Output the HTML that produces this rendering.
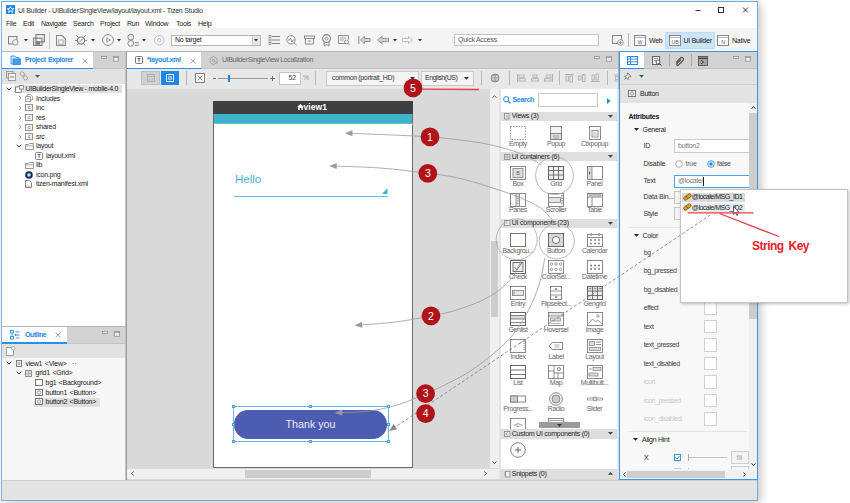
<!DOCTYPE html>
<html><head><meta charset="utf-8"><title>UI Builder</title>
<style>
*{box-sizing:border-box;margin:0;padding:0}
html,body{width:850px;height:503px;background:#fff;overflow:hidden}
body{position:relative;font-family:"Liberation Sans",sans-serif;font-size:7px;letter-spacing:-0.25px;color:#333;line-height:1}
.a{position:absolute}
.t{position:absolute;white-space:nowrap;line-height:10px;height:10px}
.b{font-weight:bold}
.blue{color:#1e88e5}
.gray{color:#999}
.lt{color:#c8c8c8}
svg{position:absolute;overflow:visible}
</style></head><body>
<div class="a" style="left:1px;top:1px;width:757.3px;height:500px;background:#f0f0f0;border:1px solid #74a9dc;border-left:1.300px solid #7fb0df;box-shadow:3px 2px 8px rgba(0,0,0,0.220)"></div>
<div class="a" style="left:2px;top:2px;width:755.3px;height:26px;background:#fff"></div>
<svg style="left:6px;top:5px" width="9" height="9" viewBox="0 0 9 9" ><rect width="9" height="9" fill="#1e88e5"/><path d="M4.5 1.5 L5.4 3.6 L7.6 3.8 L5.9 5.2 L6.5 7.4 L4.5 6.2 L2.5 7.4 L3.1 5.2 L1.4 3.8 L3.6 3.6Z" fill="none" stroke="#fff" stroke-width="0.9"/></svg>
<div class="t " style="left:18px;top:5.5px;color:#333;letter-spacing:-0.220px">UI Builder - UIBuilderSingleView/layout/layout.xml - Tizen Studio</div>
<svg style="left:690px;top:2px" width="66" height="15" viewBox="0 0 66 15" ><path d="M5.5 8.5h5" stroke="#333" stroke-width="1" fill="none"/><rect x="28.5" y="5.5" width="5" height="5" fill="none" stroke="#333" stroke-width="1"/><path d="M53 5.5l5 5M58 5.5l-5 5" stroke="#333" stroke-width="1" fill="none"/></svg>
<div class="t " style="left:6px;top:18.5px;color:#222">File</div>
<div class="t " style="left:23px;top:18.5px;color:#222">Edit</div>
<div class="t " style="left:41px;top:18.5px;color:#222">Navigate</div>
<div class="t " style="left:73px;top:18.5px;color:#222">Search</div>
<div class="t " style="left:100px;top:18.5px;color:#222">Project</div>
<div class="t " style="left:127px;top:18.5px;color:#222">Run</div>
<div class="t " style="left:145px;top:18.5px;color:#222">Window</div>
<div class="t " style="left:176px;top:18.5px;color:#222">Tools</div>
<div class="t " style="left:198px;top:18.5px;color:#222">Help</div>
<div class="a" style="left:2px;top:28px;width:755.3px;height:23px;background:#f4f4f4"></div>
<svg style="left:8px;top:34.75px" width="10.5" height="10.5" viewBox="0 0 10 10"><rect x="0.5" y="1.5" width="8" height="7" fill="none" stroke="#828282"/><circle cx="7" cy="7" r="2.6" fill="#f4f4f4" stroke="#828282" stroke-width="0.8"/></svg>
<svg style="left:24px;top:39px" width="4" height="3" viewBox="0 0 4 3" ><path d="M0 0h4l-2 2.5z" fill="#333"/></svg>
<svg style="left:33px;top:34.0px" width="12.0" height="12.0" viewBox="0 0 10 10"><rect x="0.5" y="3.5" width="7" height="6" fill="none" stroke="#828282"/><rect x="2.5" y="0.5" width="7" height="6" fill="none" stroke="#828282"/><rect x="2" y="6" width="4" height="3" fill="#828282"/></svg>
<div class="a" style="left:49px;top:32px;width:1px;height:17px;background:#c4c4c4"></div>
<svg style="left:56px;top:34.5px" width="9.9" height="11.0" viewBox="0 0 9 10"><path d="M0.5 0.5h5l3 3v6h-8z" fill="none" stroke="#888"/><rect x="2.5" y="4.5" width="4" height="4" fill="none" stroke="#aaa" stroke-width="0.8"/></svg>
<svg style="left:75px;top:34.0px" width="12.0" height="12.0" viewBox="0 0 10 10"><circle cx="5" cy="5.5" r="3" fill="none" stroke="#828282"/><path d="M1 1l2 2M9 1l-2 2M0 5.5h2M8 5.5h2M1.5 9.5l1.5-1.5M8.500 9.5l-1.5-1.500M3.500 7l3.500-3.500" stroke="#828282" stroke-width="0.8" fill="none"/></svg>
<svg style="left:91px;top:39px" width="4" height="3" viewBox="0 0 4 3" ><path d="M0 0h4l-2 2.5z" fill="#333"/></svg>
<svg style="left:101.5px;top:34.0px" width="12.0" height="12.0" viewBox="0 0 10 10"><circle cx="5" cy="5" r="4.5" fill="none" stroke="#888" stroke-width="0.8"/><path d="M4 3.200l3 1.800l-3 1.800z" fill="none" stroke="#888" stroke-width="0.7"/></svg>
<svg style="left:117px;top:39px" width="4" height="3" viewBox="0 0 4 3" ><path d="M0 0h4l-2 2.5z" fill="#333"/></svg>
<svg style="left:126.5px;top:33.75px" width="12.5" height="12.5" viewBox="0 0 10 10"><circle cx="3" cy="2.5" r="2.300" fill="none" stroke="#828282" stroke-width="0.8"/><circle cx="3" cy="7.500" r="2.300" fill="none" stroke="#828282" stroke-width="0.8"/><path d="M6.500 7h3M6.500 9h3" stroke="#828282" stroke-width="0.8"/></svg>
<svg style="left:142px;top:39px" width="4" height="3" viewBox="0 0 4 3" ><path d="M0 0h4l-2 2.5z" fill="#333"/></svg>
<svg style="left:154px;top:34.75px" width="10.5" height="10.5" viewBox="0 0 10 10"><circle cx="5" cy="5" r="4.500" fill="none" stroke="#bbb" stroke-width="0.8"/><circle cx="5" cy="5" r="1.700" fill="none" stroke="#bbb" stroke-width="0.8"/></svg>
<div class="a" style="left:171px;top:34.5px;width:90px;height:11.5px;background:#fff;border:1px solid #b5b5b5"></div>
<div class="t " style="left:175px;top:35.3px;color:#222">No target</div>
<div class="a" style="left:252px;top:35.5px;width:8px;height:9.5px;background:#e6e6e6;border-left:1px solid #c8c8c8"></div>
<svg style="left:254.2px;top:39px" width="4" height="3" viewBox="0 0 4 3" ><path d="M0 0h4l-2 2.5z" fill="#333"/></svg>
<svg style="left:269px;top:35.0px" width="11" height="10" viewBox="0 0 11 10"><path d="M3 1.500h8M3 5h8M3 8.500h8" stroke="#828282" stroke-width="1"/><rect x="0" y="0.500" width="2" height="2" fill="none" stroke="#828282" stroke-width="0.7"/><rect x="0" y="4" width="2" height="2" fill="none" stroke="#828282" stroke-width="0.7"/><rect x="0" y="7.500" width="2" height="2" fill="none" stroke="#828282" stroke-width="0.7"/></svg>
<svg style="left:286px;top:35.0px" width="11" height="10" viewBox="0 0 11 10"><circle cx="5" cy="4.800" r="4.200" fill="none" stroke="#828282" stroke-width="0.9"/><path d="M2 5h1.500l1-2l1.500 4l1-2h1.500M8 8l2.500 2" stroke="#828282" stroke-width="0.8" fill="none"/></svg>
<svg style="left:304px;top:35.0px" width="11" height="10" viewBox="0 0 11 10"><rect x="0.500" y="1" width="10" height="2.500" fill="none" stroke="#828282" stroke-width="0.9"/><path d="M1.500 3.500v5.500h8v-5.500M4 6h3" fill="none" stroke="#828282" stroke-width="0.9"/></svg>
<svg style="left:320px;top:34.0px" width="13.2" height="12.0" viewBox="0 0 11 10"><circle cx="5.500" cy="3.800" r="3.300" fill="none" stroke="#828282" stroke-width="0.9"/><circle cx="5.500" cy="3.800" r="1.200" fill="none" stroke="#828282" stroke-width="0.7"/><path d="M3.500 6.800v3.200l2-1l2 1v-3.200" fill="none" stroke="#828282" stroke-width="0.8"/></svg>
<svg style="left:338px;top:35.0px" width="12" height="10" viewBox="0 0 12 10"><path d="M8 8.500h-7.500v-8h10v4" fill="none" stroke="#828282" stroke-width="0.9"/><path d="M2 3h6M2 5h4" stroke="#828282" stroke-width="0.7"/><circle cx="8.500" cy="7" r="2" fill="none" stroke="#828282" stroke-width="0.8"/><path d="M10 8.500l1.700 1.500" stroke="#828282" stroke-width="0.8"/></svg>
<svg style="left:358px;top:35.0px" width="13" height="10" viewBox="0 0 13 10"><path d="M0.800 1v8" stroke="#828282" stroke-width="0.9"/><path d="M2.500 5l4-3.500v2h5.500v3h-5.500v2z" fill="#cfcfcf" stroke="#828282" stroke-width="0.8"/></svg>
<svg style="left:377px;top:35.0px" width="12" height="10" viewBox="0 0 12 10"><path d="M0.500 5l4.500-3.800v2.200h6.500v3.200h-6.500v2.200z" fill="#cfcfcf" stroke="#828282" stroke-width="0.8"/></svg>
<svg style="left:392.5px;top:39px" width="4" height="3" viewBox="0 0 4 3" ><path d="M0 0h4l-2 2.5z" fill="#333"/></svg>
<svg style="left:401.5px;top:35.0px" width="11" height="10" viewBox="0 0 11 10"><path d="M10.500 5l-4-3.500v2h-6v3h6v2z" fill="none" stroke="#aaa" stroke-width="0.8"/></svg>
<svg style="left:417.5px;top:39px" width="4" height="3" viewBox="0 0 4 3" ><path d="M0 0h4l-2 2.5z" fill="#333"/></svg>
<div class="a" style="left:454px;top:33.5px;width:145px;height:12px;background:#fff;border:1px solid #c6c6c6"></div>
<div class="t " style="left:458px;top:34.8px;color:#555">Quick Access</div>
<svg style="left:612px;top:35.0px" width="12" height="11" viewBox="0 0 12 11"><rect x="0.500" y="0.500" width="9" height="8" fill="none" stroke="#828282"/><circle cx="8.500" cy="7.500" r="2.800" fill="#f4f4f4" stroke="#828282" stroke-width="0.8"/><path d="M7 7.500h3M8.500 6v3" stroke="#828282" stroke-width="0.7"/></svg>
<div class="a" style="left:627.5px;top:33px;width:1px;height:14px;background:#b8b8b8"></div>
<svg style="left:634px;top:35px" width="12" height="11" viewBox="0 0 12 11" ><rect x="0.500" y="0.500" width="11" height="10" fill="#fff" stroke="#7a7a7a" stroke-width="0.9"/><path d="M0.500 2.500h11" stroke="#9a9a9a" stroke-width="0.700"/><text x="6" y="8.800" font-size="5.500" text-anchor="middle" fill="#666" font-family="Liberation Sans, sans-serif">W</text></svg>
<div class="t " style="left:649px;top:35.5px;color:#222">Web</div>
<div class="a" style="left:665px;top:32px;width:49.5px;height:16.5px;background:#cce4f7;border:1px solid #bcdcf4"></div>
<svg style="left:668.5px;top:35px" width="12" height="11" viewBox="0 0 12 11" ><rect x="0.500" y="0.500" width="11" height="10" fill="#fff" stroke="#7a7a7a" stroke-width="0.9"/><path d="M0.500 2.500h11" stroke="#9a9a9a" stroke-width="0.700"/><text x="6" y="8.800" font-size="5.500" text-anchor="middle" fill="#666" font-family="Liberation Sans, sans-serif">UB</text></svg>
<div class="t " style="left:683.5px;top:35.5px;color:#222">UI Builder</div>
<svg style="left:717px;top:35px" width="12" height="11" viewBox="0 0 12 11" ><rect x="0.500" y="0.500" width="11" height="10" fill="#fff" stroke="#7a7a7a" stroke-width="0.9"/><path d="M0.500 2.500h11" stroke="#9a9a9a" stroke-width="0.700"/><text x="6" y="8.800" font-size="5.500" text-anchor="middle" fill="#666" font-family="Liberation Sans, sans-serif">N</text></svg>
<div class="t " style="left:732px;top:35.5px;color:#222">Native</div>
<div class="a" style="left:2px;top:51px;width:123.5px;height:274.5px;background:#fff;border:1px solid #c4c4c4;border-top:1px solid #bdbdbd;border-bottom:none;border-left:none"></div>
<div class="a" style="left:2px;top:52px;width:123px;height:16px;background:#d2d2d2"></div>
<div class="a" style="left:2px;top:52px;width:91px;height:16px;background:#fff"></div>
<div class="a" style="left:2px;top:67.5px;width:91px;height:1.5px;background:#2b8fe6"></div>
<div class="a" style="left:93px;top:68px;width:32px;height:1px;background:#c2c2c2"></div>
<svg style="left:10px;top:55px" width="11" height="10" viewBox="0 0 11 10" ><path d="M1 1h4l1 1.500h3v6.500h-8z" fill="#cfe6fb" stroke="#3a94e6" stroke-width="0.9"/><path d="M3 4h7.500v5.500h-7.500z" fill="#4a9fea" stroke="#2b86dc" stroke-width="0.8"/></svg>
<div class="t b blue" style="left:25px;top:55.3px;letter-spacing:-0.450px;word-spacing:1px">Project Explorer</div>
<svg style="left:81.5px;top:57.5px" width="6" height="6" viewBox="0 0 6 6" ><path d="M0.500 0.500l5 5M5.500 0.500l-5 5" stroke="#999" stroke-width="0.8"/></svg>
<svg style="left:101px;top:56px" width="18" height="7" viewBox="0 0 18 7" ><rect x="0.500" y="0.500" width="5" height="2" fill="#e4e4e4" stroke="#949494" stroke-width="0.8"/><rect x="12.500" y="0.500" width="5" height="4.800" fill="#e8e8e8" stroke="#949494" stroke-width="0.8"/><path d="M12.500 1.500h5.500" stroke="#949494" stroke-width="0.8"/></svg>
<div class="a" style="left:2px;top:69px;width:123px;height:15px;background:#e2e2e2"></div>
<svg style="left:6px;top:71px" width="10" height="10" viewBox="0 0 10 10" ><rect x="0.500" y="0.500" width="6.500" height="6.500" fill="none" stroke="#8a8a8a" stroke-width="0.8"/><rect x="2.500" y="2.500" width="7" height="7" fill="#f2f2f2" stroke="#8a8a8a" stroke-width="0.8"/><path d="M4 6h4" stroke="#777" stroke-width="0.9"/></svg>
<svg style="left:19px;top:71px" width="10" height="10" viewBox="0 0 10 10" ><ellipse cx="3.300" cy="3" rx="2.400" ry="2" fill="none" stroke="#999" stroke-width="0.8" transform="rotate(40 3.300 3)"/><ellipse cx="6.300" cy="6.800" rx="2.400" ry="2" fill="none" stroke="#999" stroke-width="0.8" transform="rotate(40 6.300 6.800)"/></svg>
<svg style="left:35px;top:75px" width="5" height="3" viewBox="0 0 5 3" ><path d="M0 0h5l-2.500 2.800z" fill="#555"/></svg>
<div class="a" style="left:14px;top:84.5px;width:107.5px;height:8.5px;background:#e1e1e1"></div>
<svg style="left:6px;top:86.8px" width="6" height="4" viewBox="0 0 6 4" ><path d="M0.700 0.700l2.300 2.300l2.300-2.300" fill="none" stroke="#333" stroke-width="1"/></svg>
<svg style="left:14.5px;top:84.8px" width="9" height="8" viewBox="0 0 9 8" ><path d="M0.500 2h3l0.800-1h2v6.500h-5.800z" fill="#fafafa" stroke="#7a7a7a" stroke-width="0.9"/><rect x="4.500" y="0.500" width="4" height="3.500" fill="#fff" stroke="#7a7a7a" stroke-width="0.8"/></svg>
<div class="t " style="left:25.5px;top:83.8px;color:#222;letter-spacing:-0.300px">UIBuilderSingleView - mobile-4.0</div>
<svg style="left:17.5px;top:95.4px" width="4" height="6" viewBox="0 0 4 6" ><path d="M0.800 0.800l2.200 2.200l-2.200 2.200" fill="none" stroke="#999" stroke-width="0.9"/></svg>
<svg style="left:24.5px;top:94.4px" width="8" height="8" viewBox="0 0 8 8" ><path d="M0.500 2.500h5v5h-5z" fill="#f4f4f4" stroke="#8c8c8c" stroke-width="0.8"/><path d="M2.500 2.500v-2h3l2 2v3.500h-2" fill="none" stroke="#8c8c8c" stroke-width="0.8"/><path d="M2 5.500l1-1.500l1 1.500" fill="none" stroke="#666" stroke-width="0.600"/></svg>
<div class="t " style="left:36px;top:93.9px;color:#222">Includes</div>
<svg style="left:17.5px;top:104.9px" width="4" height="6" viewBox="0 0 4 6" ><path d="M0.800 0.800l2.200 2.200l-2.200 2.200" fill="none" stroke="#999" stroke-width="0.9"/></svg>
<svg style="left:24.5px;top:104.4px" width="8" height="7" viewBox="0 0 8 7" ><rect x="0.500" y="0.500" width="7" height="6" fill="#f2f2f2" stroke="#8c8c8c" stroke-width="0.9"/><text x="4" y="5.300" font-size="5" text-anchor="middle" fill="#666" font-family="Liberation Sans, sans-serif">c</text></svg>
<div class="t " style="left:36px;top:102.9px;color:#222">inc</div>
<svg style="left:17.5px;top:114.5px" width="4" height="6" viewBox="0 0 4 6" ><path d="M0.800 0.800l2.200 2.200l-2.200 2.200" fill="none" stroke="#999" stroke-width="0.9"/></svg>
<svg style="left:24.5px;top:114.0px" width="8" height="7" viewBox="0 0 8 7" ><rect x="0.500" y="0.500" width="7" height="6" fill="#f2f2f2" stroke="#8c8c8c" stroke-width="0.9"/><text x="4" y="5.300" font-size="5" text-anchor="middle" fill="#666" font-family="Liberation Sans, sans-serif">c</text></svg>
<div class="t " style="left:36px;top:112.5px;color:#222">res</div>
<svg style="left:17.5px;top:124px" width="4" height="6" viewBox="0 0 4 6" ><path d="M0.800 0.800l2.200 2.200l-2.200 2.200" fill="none" stroke="#999" stroke-width="0.9"/></svg>
<svg style="left:24.5px;top:123.5px" width="8" height="7" viewBox="0 0 8 7" ><rect x="0.500" y="0.500" width="7" height="6" fill="#f2f2f2" stroke="#8c8c8c" stroke-width="0.9"/><text x="4" y="5.300" font-size="5" text-anchor="middle" fill="#666" font-family="Liberation Sans, sans-serif">c</text></svg>
<div class="t " style="left:36px;top:122px;color:#222">shared</div>
<svg style="left:17.5px;top:133.5px" width="4" height="6" viewBox="0 0 4 6" ><path d="M0.800 0.800l2.200 2.200l-2.200 2.200" fill="none" stroke="#999" stroke-width="0.9"/></svg>
<svg style="left:24.5px;top:133.0px" width="8" height="7" viewBox="0 0 8 7" ><rect x="0.500" y="0.500" width="7" height="6" fill="#f2f2f2" stroke="#8c8c8c" stroke-width="0.9"/><text x="4" y="5.300" font-size="5" text-anchor="middle" fill="#666" font-family="Liberation Sans, sans-serif">c</text></svg>
<div class="t " style="left:36px;top:131.5px;color:#222">src</div>
<svg style="left:15.5px;top:144px" width="6" height="4" viewBox="0 0 6 4" ><path d="M0.700 0.700l2.300 2.300l2.300-2.300" fill="none" stroke="#333" stroke-width="1"/></svg>
<svg style="left:24.5px;top:142.5px" width="9" height="7" viewBox="0 0 9 7" ><path d="M0.500 1.500h3l0.800-1h4.200v6h-8z" fill="#fafafa" stroke="#8c8c8c" stroke-width="0.9"/><path d="M0.500 2.800h8" stroke="#8c8c8c" stroke-width="0.700"/></svg>
<div class="t " style="left:36px;top:141px;color:#222">layout</div>
<svg style="left:35px;top:151.5px" width="8" height="8" viewBox="0 0 8 8" ><rect x="0.500" y="0.500" width="7" height="7" rx="1" fill="#fff" stroke="#777" stroke-width="0.9"/><path d="M2.500 2.500h3M4 2.500v3.500" stroke="#555" stroke-width="0.9"/></svg>
<div class="t " style="left:46px;top:150.5px;color:#222">layout.xml</div>
<svg style="left:24.5px;top:161.6px" width="9" height="7" viewBox="0 0 9 7" ><path d="M0.500 1.500h3l0.800-1h4.200v6h-8z" fill="#fafafa" stroke="#8c8c8c" stroke-width="0.9"/><path d="M0.500 2.800h8" stroke="#8c8c8c" stroke-width="0.700"/></svg>
<div class="t " style="left:36px;top:160.1px;color:#222">lib</div>
<svg style="left:24.5px;top:170.5px" width="8" height="8" viewBox="0 0 8 8" ><circle cx="4" cy="4" r="3.800" fill="#1d2b4f"/><circle cx="4" cy="4" r="2" fill="#6fb7e9"/><circle cx="4" cy="4" r="0.900" fill="#fff"/></svg>
<div class="t " style="left:36px;top:169.5px;color:#222">icon.png</div>
<svg style="left:25px;top:180px" width="7" height="8" viewBox="0 0 7 8" ><path d="M0.500 0.500h4l2 2v5h-6z" fill="#fff" stroke="#777" stroke-width="0.9"/><path d="M2 5.500a1.200 1.200 0 1 0 2 0" fill="none" stroke="#777" stroke-width="0.700"/></svg>
<div class="t " style="left:36px;top:179px;color:#222">tizen-manifest.xml</div>
<div class="a" style="left:2px;top:325.5px;width:123.5px;height:154px;background:#f7f7f7;border:1px solid #c4c4c4;border-top:1px solid #b4b4b4;border-bottom:none;border-left:none"></div>
<div class="a" style="left:2px;top:326.5px;width:123px;height:16.5px;background:#d2d2d2"></div>
<div class="a" style="left:2px;top:326.5px;width:65px;height:16.5px;background:#fff"></div>
<div class="a" style="left:2px;top:342px;width:65px;height:1.5px;background:#2b8fe6"></div>
<div class="a" style="left:67px;top:342.5px;width:58px;height:1px;background:#c2c2c2"></div>
<svg style="left:10px;top:330px" width="10" height="10" viewBox="0 0 10 10" ><rect x="0.500" y="0.500" width="3" height="2.500" fill="none" stroke="#2b8fe6" stroke-width="0.9"/><rect x="0.500" y="6.500" width="3" height="2.500" fill="none" stroke="#2b8fe6" stroke-width="0.9"/><path d="M2 3v3.500M5.500 2h4M5.500 5h4M5.500 8h4" stroke="#2b8fe6" stroke-width="0.9" fill="none"/><circle cx="5.500" cy="5" r="1" fill="#2b8fe6"/></svg>
<div class="t b blue" style="left:25px;top:329.8px;letter-spacing:-0.400px">Outline</div>
<svg style="left:55px;top:332px" width="6" height="6" viewBox="0 0 6 6" ><path d="M0.500 0.500l5 5M5.500 0.500l-5 5" stroke="#999" stroke-width="0.8"/></svg>
<svg style="left:102px;top:330.5px" width="18" height="7" viewBox="0 0 18 7" ><rect x="0.500" y="0.500" width="5" height="2" fill="#e4e4e4" stroke="#949494" stroke-width="0.8"/><rect x="12.500" y="0.500" width="5" height="4.800" fill="#e8e8e8" stroke="#949494" stroke-width="0.8"/><path d="M12.500 1.500h5.500" stroke="#949494" stroke-width="0.8"/></svg>
<div class="a" style="left:2px;top:343.5px;width:123px;height:14px;background:#e2e2e2"></div>
<svg style="left:6px;top:346px" width="10" height="10" viewBox="0 0 10 10" ><path d="M0.500 1.500h5l2 2v6h-7z" fill="#fff" stroke="#8a8a8a" stroke-width="0.8"/><circle cx="7.300" cy="2.300" r="1.800" fill="#fff" stroke="#8a8a8a" stroke-width="0.700"/></svg>
<svg style="left:6px;top:361.4px" width="6" height="4" viewBox="0 0 6 4" ><path d="M0.700 0.700l2.300 2.300l2.300-2.300" fill="none" stroke="#333" stroke-width="1"/></svg>
<svg style="left:15.5px;top:359.9px" width="6" height="7" viewBox="0 0 6 7" ><rect x="0.500" y="0.500" width="5" height="6" fill="#eee" stroke="#777" stroke-width="0.9"/><rect x="1.800" y="1.800" width="2.400" height="3.400" fill="#bbb"/></svg>
<div class="t " style="left:25.5px;top:358.8px;color:#222;word-spacing:1px">view1 &lt;View&gt;</div>
<svg style="left:72px;top:361.9px" width="5" height="3" viewBox="0 0 5 3" ><path d="M0.500 1.500h1.500M3 1.500h1.500" stroke="#999" stroke-width="1.200"/></svg>
<svg style="left:15.5px;top:371px" width="6" height="4" viewBox="0 0 6 4" ><path d="M0.700 0.700l2.300 2.300l2.300-2.300" fill="none" stroke="#333" stroke-width="1"/></svg>
<svg style="left:25px;top:369.5px" width="7" height="7" viewBox="0 0 7 7" ><rect x="0.500" y="0.500" width="6" height="6" fill="#ddd" stroke="#888" stroke-width="0.9"/><path d="M0.500 3.500h6M3.500 0.500v6" stroke="#999" stroke-width="0.600"/></svg>
<div class="t " style="left:35.5px;top:368.4px;color:#222;word-spacing:1px">grid1 &lt;Grid&gt;</div>
<svg style="left:35px;top:379.2px" width="8" height="7" viewBox="0 0 8 7" ><rect x="0.500" y="0.500" width="7" height="6" fill="#fff" stroke="#666" stroke-width="0.9"/></svg>
<div class="t " style="left:45.5px;top:377.7px;color:#222;word-spacing:0.500px">bg1 &lt;Background&gt;</div>
<div class="a" style="left:33.5px;top:397.5px;width:66.5px;height:9px;background:#dedede"></div>
<svg style="left:35px;top:388.7px" width="8" height="7" viewBox="0 0 8 7" ><rect x="0.500" y="0.500" width="7" height="6" fill="#fff" stroke="#666" stroke-width="0.9"/><circle cx="4" cy="3.500" r="1.700" fill="none" stroke="#777" stroke-width="0.800"/></svg>
<div class="t " style="left:45.5px;top:387.5px;color:#222;word-spacing:0.800px">button1 &lt;Button&gt;</div>
<svg style="left:35px;top:398.3px" width="8" height="7" viewBox="0 0 8 7" ><rect x="0.500" y="0.500" width="7" height="6" fill="#fff" stroke="#666" stroke-width="0.9"/><circle cx="4" cy="3.500" r="1.700" fill="none" stroke="#777" stroke-width="0.800"/></svg>
<div class="t " style="left:45.5px;top:397.1px;color:#222;word-spacing:0.800px">button2 &lt;Button&gt;</div>
<div class="a" style="left:125.5px;top:51px;width:493.5px;height:428.5px;background:#d9d9d9;border:1px solid #b4b4b4;border-left:1px solid #9c9c9c;border-bottom:none"></div>
<div class="a" style="left:126.5px;top:52px;width:491.5px;height:16px;background:#d2d2d2"></div>
<div class="a" style="left:126.5px;top:52px;width:74.5px;height:16px;background:#fff"></div>
<div class="a" style="left:126.5px;top:67.5px;width:74.5px;height:1.5px;background:#2b8fe6"></div>
<div class="a" style="left:201px;top:68px;width:417px;height:1px;background:#c2c2c2"></div>
<svg style="left:135px;top:56px" width="8" height="8" viewBox="0 0 8 8" ><rect x="0.500" y="0.500" width="7" height="7" rx="1" fill="#fff" stroke="#666" stroke-width="0.9"/><path d="M2.500 2.500h3M4 2.500v3.500" stroke="#444" stroke-width="0.9"/></svg>
<div class="t b blue" style="left:147px;top:55.3px;letter-spacing:-0.350px">*layout.xml</div>
<svg style="left:189.5px;top:57.5px" width="6" height="6" viewBox="0 0 6 6" ><path d="M0.500 0.500l5 5M5.500 0.500l-5 5" stroke="#999" stroke-width="0.8"/></svg>
<svg style="left:208.5px;top:56px" width="9" height="9" viewBox="0 0 9 9" ><path d="M4.500 0.500l3.500 2v4l-3.500 2l-3.500-2v-4z" fill="none" stroke="#999" stroke-width="0.8"/><circle cx="4.500" cy="4.500" r="1.300" fill="none" stroke="#999" stroke-width="0.8"/><path d="M6 6l3 1" stroke="#999" stroke-width="0.8"/></svg>
<div class="t " style="left:222px;top:55.3px;color:#666;letter-spacing:-0.350px">UIBuilderSingleView Localization</div>
<svg style="left:593.5px;top:55.5px" width="18" height="7" viewBox="0 0 18 7" ><rect x="0.500" y="0.500" width="5" height="2" fill="#e4e4e4" stroke="#949494" stroke-width="0.8"/><rect x="12.500" y="0.500" width="5" height="4.800" fill="#e8e8e8" stroke="#949494" stroke-width="0.8"/><path d="M12.500 1.500h5.500" stroke="#949494" stroke-width="0.8"/></svg>
<div class="a" style="left:126.5px;top:69px;width:491.5px;height:19.8px;background:#e8e8e8"></div>
<div class="a" style="left:141px;top:71px;width:19px;height:14px;background:#d2d2d2;border:1px solid #bdbdbd"></div>
<svg style="left:146.5px;top:74px" width="8" height="8" viewBox="0 0 8 8" ><rect x="0.500" y="0.500" width="7" height="7" fill="none" stroke="#a8a8a8" stroke-width="0.9"/><path d="M0.500 2.500h7" stroke="#a8a8a8" stroke-width="0.8"/><path d="M3 4l-1 1.200l1 1.200M5 4l1 1.200l-1 1.200" stroke="#a8a8a8" stroke-width="0.600" fill="none"/></svg>
<div class="a" style="left:160.5px;top:71px;width:18.5px;height:14px;background:#1e88e5"></div>
<svg style="left:165.5px;top:74px" width="8" height="8" viewBox="0 0 8 8" ><rect x="0.500" y="0.500" width="7" height="7" fill="none" stroke="#fff" stroke-width="0.9"/><rect x="2.800" y="2.800" width="2.400" height="2.400" fill="none" stroke="#fff" stroke-width="0.800"/></svg>
<div class="a" style="left:185.5px;top:71px;width:1px;height:14px;background:#b8b8b8"></div>
<svg style="left:195px;top:73px" width="10" height="10" viewBox="0 0 10 10" ><rect x="0.500" y="0.500" width="9" height="9" fill="#fff" stroke="#777" stroke-width="0.9"/><path d="M2.500 2.500l5 5M7.500 2.500l-5 5" stroke="#777" stroke-width="0.700"/></svg>
<div class="a" style="left:213px;top:78px;width:3px;height:1px;background:#666"></div>
<div class="a" style="left:218px;top:78px;width:50px;height:1px;background:#999"></div>
<div class="a" style="left:227.6px;top:74.5px;width:2.6px;height:7.5px;background:#1e88e5"></div>
<svg style="left:269.5px;top:76px" width="5" height="5" viewBox="0 0 5 5" ><path d="M0 2.500h5M2.500 0v5" stroke="#666" stroke-width="0.9"/></svg>
<div class="a" style="left:279px;top:71.5px;width:21.5px;height:13px;background:#fff;border:1px solid #c4c4c4"></div>
<div class="t " style="left:288.5px;top:73.2px;color:#444">52</div>
<div class="t gray" style="left:303px;top:73.2px;">%</div>
<div class="a" style="left:315px;top:71px;width:1px;height:14px;background:#b8b8b8"></div>
<div class="a" style="left:326px;top:71px;width:92.5px;height:14.5px;background:#f4f4f4;border:1px solid #c8c8c8"></div>
<div class="t " style="left:332px;top:73.2px;color:#333;letter-spacing:-0.350px">common (portrait_HD)</div>
<svg style="left:409.5px;top:77px" width="5" height="3" viewBox="0 0 5 3" ><path d="M0 0h5l-2.500 2.800z" fill="#333"/></svg>
<div class="a" style="left:420.5px;top:71px;width:53.5px;height:14.5px;background:#f4f4f4;border:1px solid #c8c8c8"></div>
<div class="t " style="left:425px;top:73.2px;color:#333;letter-spacing:-0.450px">English(US)</div>
<svg style="left:463.5px;top:77px" width="5" height="3" viewBox="0 0 5 3" ><path d="M0 0h5l-2.500 2.800z" fill="#333"/></svg>
<div class="a" style="left:481px;top:71px;width:1px;height:14px;background:#b8b8b8"></div>
<svg style="left:490px;top:73px" width="10" height="10" viewBox="0 0 10 10" ><circle cx="5" cy="5" r="4" fill="#ddd" stroke="#888" stroke-width="1"/><path d="M1 5h8M5 1v8M2.200 2.800h5.600M2.200 7.200h5.600" stroke="#888" stroke-width="0.700"/></svg>
<div class="a" style="left:508.5px;top:71px;width:1px;height:14px;background:#b8b8b8"></div>
<svg style="left:516.5px;top:74px" width="9" height="8" viewBox="0 0 9 8" ><path d="M0.500 0v8" stroke="#aaa" stroke-width="0.9"/><rect x="2" y="1" width="5" height="2.300" fill="none" stroke="#aaa" stroke-width="0.800"/><rect x="2" y="4.700" width="6.500" height="2.300" fill="none" stroke="#aaa" stroke-width="0.800"/></svg>
<svg style="left:530.5px;top:74px" width="8" height="8" viewBox="0 0 8 8" ><rect x="2" y="1" width="4" height="2.300" fill="none" stroke="#aaa" stroke-width="0.800"/><rect x="0.500" y="4.700" width="7" height="2.300" fill="none" stroke="#aaa" stroke-width="0.800"/></svg>
<svg style="left:543.5px;top:74px" width="9" height="8" viewBox="0 0 9 8" ><path d="M8.500 0v8" stroke="#aaa" stroke-width="0.9"/><rect x="2" y="1" width="5" height="2.300" fill="none" stroke="#aaa" stroke-width="0.800"/><rect x="0.500" y="4.700" width="6.500" height="2.300" fill="none" stroke="#aaa" stroke-width="0.800"/></svg>
<div class="a" style="left:558.5px;top:71px;width:1px;height:14px;background:#b8b8b8"></div>
<svg style="left:564.5px;top:74px" width="9" height="8" viewBox="0 0 9 8" ><path d="M0 0.500h9" stroke="#aaa" stroke-width="0.9"/><rect x="1" y="2" width="2.500" height="5" fill="none" stroke="#aaa" stroke-width="0.800"/><rect x="5" y="2" width="2.500" height="6" fill="none" stroke="#aaa" stroke-width="0.800"/></svg>
<svg style="left:578px;top:74px" width="8" height="8" viewBox="0 0 8 8" ><rect x="0.500" y="2" width="2.500" height="4" fill="none" stroke="#aaa" stroke-width="0.800"/><rect x="4.500" y="0.500" width="2.500" height="7" fill="none" stroke="#aaa" stroke-width="0.800"/></svg>
<svg style="left:590.5px;top:74px" width="9" height="8" viewBox="0 0 9 8" ><path d="M0 7.500h9" stroke="#aaa" stroke-width="0.9"/><rect x="1" y="1" width="2.500" height="5" fill="none" stroke="#aaa" stroke-width="0.800"/><rect x="5" y="0" width="2.500" height="6" fill="none" stroke="#aaa" stroke-width="0.800"/></svg>
<div class="a" style="left:606.5px;top:71px;width:1px;height:14px;background:#b8b8b8"></div>
<svg style="left:613.5px;top:74px" width="5" height="8" viewBox="0 0 5 8" ><path d="M0 1h5M0 7h5" stroke="#aaa" stroke-width="0.800"/><rect x="1.500" y="2.500" width="3.500" height="3" fill="none" stroke="#aaa" stroke-width="0.800"/></svg>
<div class="a" style="left:489.5px;top:89px;width:9px;height:379px;background:#f0f0f0"></div>
<div class="a" style="left:491px;top:241px;width:7px;height:76px;background:#cdcdcd"></div>
<svg style="left:491.5px;top:95px" width="5" height="3" viewBox="0 0 5 3" ><path d="M0.500 2.800l2-2.200l2 2.200" fill="none" stroke="#555" stroke-width="0.9"/></svg>
<svg style="left:491.5px;top:461px" width="5" height="3" viewBox="0 0 5 3" ><path d="M0.500 0.300l2 2.200l2-2.200" fill="none" stroke="#555" stroke-width="0.9"/></svg>
<div class="a" style="left:126.5px;top:468.5px;width:372px;height:10.5px;background:#f0f0f0"></div>
<div class="a" style="left:244.5px;top:469.5px;width:126px;height:8px;background:#cdcdcd"></div>
<svg style="left:130.5px;top:471px" width="3" height="5" viewBox="0 0 3 5" ><path d="M2.700 0.500l-2.200 2l2.200 2" fill="none" stroke="#555" stroke-width="0.9"/></svg>
<svg style="left:484px;top:471px" width="3" height="5" viewBox="0 0 3 5" ><path d="M0.300 0.500l2.200 2l-2.200 2" fill="none" stroke="#555" stroke-width="0.9"/></svg>
<div class="a" style="left:212.5px;top:100.5px;width:200.5px;height:367.5px;background:#fff;border:1px solid #6a6a6a;border-top:none"></div>
<div class="a" style="left:212.5px;top:100.5px;width:200.5px;height:13.5px;background:#3f3f3f"></div>
<div class="a" style="left:213.5px;top:114px;width:198.5px;height:10px;background:#3fb4cc"></div>
<svg style="left:213.5px;top:122.5px" width="198.5" height="2" viewBox="0 0 198.5 2" ><path d="M0 1.300h198.500" stroke="#ffffff" stroke-width="1.200" stroke-dasharray="2.500 1.500"/></svg>
<svg style="left:297px;top:103.5px" width="7" height="6" viewBox="0 0 7 6" ><path d="M3.500 0l3.500 3h-1v3h-1.700v-2h-1.600v2h-1.700v-3h-1z" fill="#fff"/></svg>
<div class="t b" style="left:303.5px;top:102.3px;color:#fff;font-size:8.500px;letter-spacing:0.100px">view1</div>
<div class="t" style="left:235px;top:172px;height:14px;line-height:14px;font-size:11.500px;color:#3fb4cc;letter-spacing:0">Hello</div>
<div class="a" style="left:234px;top:196px;width:153.7px;height:1px;background:#62c2d7"></div>
<svg style="left:382.3px;top:188px" width="5.5" height="6" viewBox="0 0 5.5 6" ><path d="M5.500 0v6h-5.500z" fill="#3fb4cc"/></svg>
<div class="a" style="left:234px;top:410px;width:153px;height:28.5px;background:#4c5cb0;border-radius:14.250px"></div>
<div class="t" style="left:234px;top:416.500px;width:153px;text-align:center;height:14px;line-height:14px;font-size:10.700px;color:#e8ebf7;letter-spacing:0">Thank you</div>
<div class="a" style="left:233px;top:406px;width:155.5px;height:36px;border:1px solid #62b5ee"></div>
<div class="a" style="left:232.0px;top:405.0px;width:3px;height:3px;background:#fff;border:0.700px solid #3c9fe8"></div>
<div class="a" style="left:232.0px;top:422.5px;width:3px;height:3px;background:#fff;border:0.700px solid #3c9fe8"></div>
<div class="a" style="left:232.0px;top:440.0px;width:3px;height:3px;background:#fff;border:0.700px solid #3c9fe8"></div>
<div class="a" style="left:309.0px;top:405.0px;width:3px;height:3px;background:#fff;border:0.700px solid #3c9fe8"></div>
<div class="a" style="left:309.0px;top:440.0px;width:3px;height:3px;background:#fff;border:0.700px solid #3c9fe8"></div>
<div class="a" style="left:386.5px;top:405.0px;width:3px;height:3px;background:#fff;border:0.700px solid #3c9fe8"></div>
<div class="a" style="left:386.5px;top:422.5px;width:3px;height:3px;background:#fff;border:0.700px solid #3c9fe8"></div>
<div class="a" style="left:386.5px;top:440.0px;width:3px;height:3px;background:#fff;border:0.700px solid #3c9fe8"></div>
<div class="a" style="left:498.5px;top:89px;width:120px;height:390px;background:#e4e4e4"></div>
<div class="a" style="left:500.5px;top:89px;width:116.5px;height:390px;background:#fff"></div>
<svg style="left:503px;top:96px" width="8" height="8" viewBox="0 0 8 8" ><circle cx="3.200" cy="3.200" r="2.600" fill="none" stroke="#1e88e5" stroke-width="1"/><path d="M5.200 5.200l2.300 2.300" stroke="#1e88e5" stroke-width="1.100"/></svg>
<div class="t b blue" style="left:512.5px;top:95.2px;letter-spacing:-0.300px">Search</div>
<div class="a" style="left:538px;top:93px;width:60px;height:13.5px;background:#fff;border:1px solid #c6c6c6"></div>
<svg style="left:606.5px;top:97.5px" width="4" height="6" viewBox="0 0 4 6" ><path d="M0 0l3.500 3l-3.500 3z" fill="#1e88e5"/></svg>
<div class="a" style="left:500.5px;top:111.5px;width:116.5px;height:9px;background:#dedede"></div>
<svg style="left:503.5px;top:113.0px" width="6" height="6" viewBox="0 0 6 6" ><rect x="0.500" y="0.500" width="4.500" height="5.500" fill="#eee" stroke="#888" stroke-width="0.800"/><rect x="1.700" y="1.700" width="2" height="3" fill="#bbb"/></svg>
<div class="t " style="left:511.8px;top:111.2px;color:#222">Views (3)</div>
<svg style="left:608px;top:114.5px" width="5" height="3" viewBox="0 0 5 3" ><path d="M0 0h5l-2.500 2.800z" fill="#444"/></svg>
<div class="a" style="left:500.5px;top:152px;width:116.5px;height:9px;background:#dedede"></div>
<svg style="left:503.5px;top:153.5px" width="6" height="6" viewBox="0 0 6 6" ><rect x="0.500" y="0.500" width="5.500" height="5" fill="#ddd" stroke="#888" stroke-width="0.800"/><path d="M0.500 3h5.500M3.200 0.500v5" stroke="#888" stroke-width="0.500"/></svg>
<div class="t " style="left:511.8px;top:151.7px;color:#222">UI containers (6)</div>
<svg style="left:608px;top:155.0px" width="5" height="3" viewBox="0 0 5 3" ><path d="M0 0h5l-2.500 2.800z" fill="#444"/></svg>
<div class="a" style="left:500.5px;top:218.5px;width:116.5px;height:9px;background:#dedede"></div>
<svg style="left:503.5px;top:220.0px" width="6" height="6" viewBox="0 0 6 6" ><rect x="0.500" y="0.500" width="5.500" height="5" fill="#eee" stroke="#888" stroke-width="0.800"/><path d="M1.500 4l1.500-1.500l1 1" stroke="#888" stroke-width="0.500" fill="none"/></svg>
<div class="t " style="left:511.8px;top:218.2px;color:#222">UI components (23)</div>
<svg style="left:608px;top:221.5px" width="5" height="3" viewBox="0 0 5 3" ><path d="M0 0h5l-2.500 2.800z" fill="#444"/></svg>
<svg style="left:510px;top:125.5px" width="16" height="14" viewBox="0 0 16 14" ><rect x="0.5" y="0.5" width="15" height="13" fill="#fff" stroke="#8a8a8a" stroke-width="0.9" stroke-dasharray="1.500 1.200"/></svg>
<div class="t" style="left:493px;top:138.5px;width:50px;text-align:center;color:#666;letter-spacing:-0.400px">Empty</div>
<svg style="left:548px;top:125.5px" width="16" height="14" viewBox="0 0 16 14" ><rect x="2.5" y="0.5" width="11" height="13" fill="#f4f4f4" stroke="#7d7d7d" stroke-width="0.9" /><rect x="2.5" y="7.5" width="11" height="6" fill="#ddd" stroke="#7d7d7d" stroke-width="0.9" /><path d="M5 10h6M5 12h6" stroke="#888" stroke-width="0.700"/></svg>
<div class="t" style="left:531px;top:138.5px;width:50px;text-align:center;color:#666;letter-spacing:-0.400px">Popup</div>
<svg style="left:586.5px;top:125.5px" width="16" height="14" viewBox="0 0 16 14" ><rect x="2.5" y="0.5" width="11" height="13" fill="#f7f7f7" stroke="#7d7d7d" stroke-width="0.9" /><rect x="5" y="4.5" width="6" height="6.5" fill="#fff" stroke="#7d7d7d" stroke-width="0.8" /><path d="M6 7h4M6 9h4" stroke="#888" stroke-width="0.600"/></svg>
<div class="t" style="left:569.5px;top:138.5px;width:50px;text-align:center;color:#666;letter-spacing:-0.400px">Ctxpopup</div>
<svg style="left:510px;top:166px" width="16" height="14" viewBox="0 0 16 14" ><rect x="0.5" y="0.5" width="15" height="13" fill="#fff" stroke="#7d7d7d" stroke-width="0.9" /><rect x="3" y="2.5" width="10" height="9" fill="#ddd" stroke="#7d7d7d" stroke-width="0.8" /><text x="8" y="9.300" font-size="5.500" text-anchor="middle" fill="#666" font-family="Liberation Sans, sans-serif">B</text></svg>
<div class="t" style="left:493px;top:178.7px;width:50px;text-align:center;color:#666;letter-spacing:-0.400px">Box</div>
<svg style="left:548px;top:166px" width="16" height="14" viewBox="0 0 16 14" ><rect x="0.5" y="0.5" width="15" height="13" fill="#f2f2f2" stroke="#666" stroke-width="1.1" /><path d="M0.500 4.500h15M0.500 9h15M5.500 0.500v13M10.500 0.500v13" stroke="#666" stroke-width="0.900"/></svg>
<div class="t" style="left:531px;top:178.7px;width:50px;text-align:center;color:#666;letter-spacing:-0.400px">Grid</div>
<svg style="left:586.5px;top:166px" width="16" height="14" viewBox="0 0 16 14" ><rect x="0.5" y="0.5" width="15" height="13" fill="#fff" stroke="#7d7d7d" stroke-width="0.9" /><rect x="0.5" y="0.5" width="4.5" height="13" fill="#ddd" stroke="#7d7d7d" stroke-width="0.8" /><path d="M2 5l1.500 2l-1.500 2z" fill="#555"/></svg>
<div class="t" style="left:569.5px;top:178.7px;width:50px;text-align:center;color:#666;letter-spacing:-0.400px">Panel</div>
<svg style="left:510px;top:192.5px" width="16" height="14" viewBox="0 0 16 14" ><rect x="0.5" y="0.5" width="15" height="13" fill="#fff" stroke="#7d7d7d" stroke-width="0.9" /><rect x="6" y="0.5" width="3.5" height="13" fill="#e4e4e4" stroke="#7d7d7d" stroke-width="0.8" /><path d="M6.500 3h2.500M6.500 5.500h2.500M6.500 8h2.500M6.500 10.500h2.500" stroke="#888" stroke-width="0.600"/></svg>
<div class="t" style="left:493px;top:205.2px;width:50px;text-align:center;color:#666;letter-spacing:-0.400px">Panes</div>
<svg style="left:548px;top:192.5px" width="16" height="14" viewBox="0 0 16 14" ><rect x="0.5" y="0.5" width="15" height="13" fill="#fff" stroke="#7d7d7d" stroke-width="0.9" /><rect x="0.5" y="4.5" width="12" height="5" fill="#e4e4e4" stroke="#7d7d7d" stroke-width="0.8" /><path d="M14 2v10" stroke="#777" stroke-width="1.200" stroke-dasharray="1.500 1"/></svg>
<div class="t" style="left:531px;top:205.2px;width:50px;text-align:center;color:#666;letter-spacing:-0.400px">Scroller</div>
<svg style="left:586.5px;top:192.5px" width="16" height="14" viewBox="0 0 16 14" ><rect x="0.5" y="0.5" width="15" height="13" fill="#fff" stroke="#7d7d7d" stroke-width="0.9" /><path d="M0.500 4h15M5 4v9.500" stroke="#7d7d7d" stroke-width="0.900"/><rect x="2" y="1.5" width="12" height="1.5" fill="#ddd" stroke="#7d7d7d" stroke-width="0.5" /></svg>
<div class="t" style="left:569.5px;top:205.2px;width:50px;text-align:center;color:#666;letter-spacing:-0.400px">Table</div>
<svg style="left:510px;top:232.5px" width="16" height="14" viewBox="0 0 16 14" ><rect x="0.5" y="0.5" width="15" height="13" fill="#fff" stroke="#777" stroke-width="1" /></svg>
<div class="t" style="left:493px;top:245.5px;width:50px;text-align:center;color:#666;letter-spacing:-0.400px">Backgrou...</div>
<svg style="left:548px;top:232.5px" width="16" height="14" viewBox="0 0 16 14" ><rect x="0.5" y="0.5" width="15" height="13" fill="#d8d8d8" stroke="#666" stroke-width="1" /><circle cx="8" cy="7" r="3.600" fill="#fff" stroke="#666" stroke-width="0.900"/></svg>
<div class="t" style="left:531px;top:245.5px;width:50px;text-align:center;color:#666;letter-spacing:-0.400px">Button</div>
<svg style="left:586.5px;top:232.5px" width="16" height="14" viewBox="0 0 16 14" ><rect x="0.5" y="1.5" width="15" height="12" fill="#fff" stroke="#7d7d7d" stroke-width="0.9" /><path d="M0.500 4.500h15M4 0v3M12 0v3" stroke="#7d7d7d" stroke-width="0.900"/><path d="M3 7h2M7 7h2M11 7h2M3 10.500h2M7 10.500h2M11 10.500h2" stroke="#888" stroke-width="1.300"/></svg>
<div class="t" style="left:569.5px;top:245.5px;width:50px;text-align:center;color:#666;letter-spacing:-0.400px">Calendar</div>
<svg style="left:510px;top:259.5px" width="16" height="14" viewBox="0 0 16 14" ><rect x="0.5" y="0.5" width="15" height="13" fill="#fff" stroke="#666" stroke-width="1" /><rect x="3" y="2.5" width="10" height="9" fill="#eee" stroke="#666" stroke-width="0.9" /><path d="M4.500 7l2.500 3l5-7.500" stroke="#666" stroke-width="0.900" fill="none"/></svg>
<div class="t" style="left:493px;top:272px;width:50px;text-align:center;color:#666;letter-spacing:-0.400px">Check</div>
<svg style="left:548px;top:259.5px" width="16" height="14" viewBox="0 0 16 14" ><rect x="0.5" y="0.5" width="15" height="13" fill="#fff" stroke="#7d7d7d" stroke-width="0.9" /><circle cx="3.5" cy="4" r="1.200" fill="none" stroke="#777" stroke-width="0.700"/><circle cx="8" cy="4" r="1.200" fill="none" stroke="#777" stroke-width="0.700"/><circle cx="12.5" cy="4" r="1.200" fill="none" stroke="#777" stroke-width="0.700"/><circle cx="3.5" cy="9.5" r="1.200" fill="none" stroke="#777" stroke-width="0.700"/><circle cx="8" cy="9.5" r="1.200" fill="none" stroke="#777" stroke-width="0.700"/><circle cx="12.5" cy="9.5" r="1.200" fill="none" stroke="#777" stroke-width="0.700"/></svg>
<div class="t" style="left:531px;top:272px;width:50px;text-align:center;color:#666;letter-spacing:-0.400px">ColorSel...</div>
<svg style="left:586.5px;top:259.5px" width="16" height="14" viewBox="0 0 16 14" ><rect x="0.5" y="0.5" width="15" height="13" fill="#fff" stroke="#7d7d7d" stroke-width="0.9" /><path d="M3 5.500h2M7 5.500h2M11 5.500h2M3 9h2M7 9h2M11 9h2" stroke="#777" stroke-width="1.500"/><path d="M6 7.200h0.010M10 7.200h0.010" stroke="#777" stroke-width="0.800" stroke-linecap="round"/></svg>
<div class="t" style="left:569.5px;top:272px;width:50px;text-align:center;color:#666;letter-spacing:-0.400px">Datetime</div>
<svg style="left:510px;top:286px" width="16" height="14" viewBox="0 0 16 14" ><rect x="0.5" y="0.5" width="15" height="13" fill="#fff" stroke="#7d7d7d" stroke-width="0.9" /><rect x="2.5" y="4.5" width="11" height="5" fill="#e8e8e8" stroke="#7d7d7d" stroke-width="0.8" /><path d="M4 5.500v3" stroke="#555" stroke-width="0.700"/></svg>
<div class="t" style="left:493px;top:298.5px;width:50px;text-align:center;color:#666;letter-spacing:-0.400px">Entry</div>
<svg style="left:548px;top:286px" width="16" height="14" viewBox="0 0 16 14" ><rect x="2.5" y="0.5" width="11" height="13" fill="#fff" stroke="#7d7d7d" stroke-width="0.9" /><path d="M2.500 5h11M2.500 9h11" stroke="#7d7d7d" stroke-width="0.800"/><path d="M6.500 3.500l1.500-1.800l1.500 1.800zM6.500 10.500l1.500 1.800l1.500-1.800z" fill="#555"/></svg>
<div class="t" style="left:531px;top:298.5px;width:50px;text-align:center;color:#666;letter-spacing:-0.400px">Flipselect...</div>
<svg style="left:586.5px;top:286px" width="16" height="14" viewBox="0 0 16 14" ><rect x="0.5" y="0.5" width="15" height="13" fill="#ececec" stroke="#666" stroke-width="1" /><path d="M0.500 5h15M0.500 9.500h15M5.500 0.500v13M10.500 0.500v13" stroke="#666" stroke-width="0.900"/><path d="M1.500 2.500h3M6.500 2.500h3M11.500 2.500h3" stroke="#999" stroke-width="1.500"/></svg>
<div class="t" style="left:569.5px;top:298.5px;width:50px;text-align:center;color:#666;letter-spacing:-0.400px">Gengrid</div>
<svg style="left:510px;top:312px" width="16" height="14" viewBox="0 0 16 14" ><rect x="0.5" y="0.5" width="15" height="13" fill="#fff" stroke="#666" stroke-width="1" /><rect x="0.5" y="3.5" width="15" height="3.5" fill="#d8d8d8" stroke="#666" stroke-width="0.8" /><path d="M0.500 10.500h15" stroke="#666" stroke-width="0.800"/></svg>
<div class="t" style="left:493px;top:325px;width:50px;text-align:center;color:#666;letter-spacing:-0.400px">Genlist</div>
<svg style="left:548px;top:312px" width="16" height="14" viewBox="0 0 16 14" ><rect x="0.5" y="0.5" width="15" height="13" fill="#fff" stroke="#7d7d7d" stroke-width="0.9" /><rect x="0.5" y="0.5" width="15" height="3.5" fill="#e4e4e4" stroke="#7d7d7d" stroke-width="0.8" /><rect x="2.5" y="6" width="10" height="3" fill="#ddd" stroke="#7d7d7d" stroke-width="0.7" /><path d="M2.500 11.500h10" stroke="#888" stroke-width="0.700"/></svg>
<div class="t" style="left:531px;top:325px;width:50px;text-align:center;color:#666;letter-spacing:-0.400px">Hoversel</div>
<svg style="left:586.5px;top:312px" width="16" height="14" viewBox="0 0 16 14" ><rect x="0.5" y="0.5" width="15" height="13" fill="#fff" stroke="#7d7d7d" stroke-width="0.9" /><path d="M1.500 11.500l4-4.500l3 3l2-2l4 3.500" fill="none" stroke="#777" stroke-width="0.800"/><circle cx="11" cy="4" r="1.200" fill="none" stroke="#777" stroke-width="0.700"/></svg>
<div class="t" style="left:569.5px;top:325px;width:50px;text-align:center;color:#666;letter-spacing:-0.400px">Image</div>
<svg style="left:510px;top:338.5px" width="16" height="14" viewBox="0 0 16 14" ><rect x="0.5" y="0.5" width="15" height="13" fill="#fff" stroke="#7d7d7d" stroke-width="0.9" /><path d="M14 2v10" stroke="#777" stroke-width="1" stroke-dasharray="1 1"/><path d="M9 5l3-2" stroke="#777" stroke-width="0.700"/></svg>
<div class="t" style="left:493px;top:351.5px;width:50px;text-align:center;color:#666;letter-spacing:-0.400px">Index</div>
<svg style="left:548px;top:338.5px" width="16" height="14" viewBox="0 0 16 14" ><path d="M1 7l3.500-3.500h10v7h-10z" fill="#fff" stroke="#7d7d7d" stroke-width="0.900"/><path d="M6.500 6h5M6.500 8h5" stroke="#888" stroke-width="0.700"/></svg>
<div class="t" style="left:531px;top:351.5px;width:50px;text-align:center;color:#666;letter-spacing:-0.400px">Label</div>
<svg style="left:586.5px;top:338.5px" width="16" height="14" viewBox="0 0 16 14" ><rect x="0.5" y="0.5" width="15" height="13" fill="#fff" stroke="#7d7d7d" stroke-width="0.9" /><rect x="2.5" y="2.5" width="5" height="4" fill="#ddd" stroke="#7d7d7d" stroke-width="0.7" /><path d="M9 3h5M9 5.500h5" stroke="#777" stroke-width="0.800"/><rect x="2.5" y="8.5" width="11" height="3" fill="#ddd" stroke="#7d7d7d" stroke-width="0.7" /></svg>
<div class="t" style="left:569.5px;top:351.5px;width:50px;text-align:center;color:#666;letter-spacing:-0.400px">Layout</div>
<svg style="left:510px;top:365px" width="16" height="14" viewBox="0 0 16 14" ><rect x="0.5" y="0.5" width="15" height="13" fill="#fff" stroke="#666" stroke-width="1" /><path d="M0.500 5h15M0.500 9.500h15" stroke="#666" stroke-width="0.900"/></svg>
<div class="t" style="left:493px;top:378px;width:50px;text-align:center;color:#666;letter-spacing:-0.400px">List</div>
<svg style="left:548px;top:365px" width="16" height="14" viewBox="0 0 16 14" ><rect x="0.5" y="0.5" width="15" height="13" fill="#fff" stroke="#7d7d7d" stroke-width="0.9" /><path d="M6 0.500v13M6 8h9.500M0.500 6h5.500M10 8v5.500" stroke="#777" stroke-width="0.800"/><circle cx="11" cy="4" r="1.500" fill="none" stroke="#666" stroke-width="0.800"/></svg>
<div class="t" style="left:531px;top:378px;width:50px;text-align:center;color:#666;letter-spacing:-0.400px">Map</div>
<svg style="left:586.5px;top:365px" width="16" height="14" viewBox="0 0 16 14" ><rect x="0.5" y="0.5" width="15" height="13" fill="#fff" stroke="#7d7d7d" stroke-width="0.9" /><rect x="6" y="2.5" width="8" height="3" fill="#ddd" stroke="#7d7d7d" stroke-width="0.7" /><rect x="2" y="8" width="9" height="3" fill="#ddd" stroke="#7d7d7d" stroke-width="0.7" /><path d="M2 4h3" stroke="#777" stroke-width="0.700"/></svg>
<div class="t" style="left:569.5px;top:378px;width:50px;text-align:center;color:#666;letter-spacing:-0.400px">Multibutt...</div>
<svg style="left:510px;top:391.5px" width="16" height="14" viewBox="0 0 16 14" ><rect x="0.5" y="4" width="15" height="6" fill="#fff" stroke="#7d7d7d" stroke-width="0.9" /><rect x="0.5" y="4" width="7" height="6" fill="#ccc" stroke="#7d7d7d" stroke-width="0.9" /></svg>
<div class="t" style="left:493px;top:404px;width:50px;text-align:center;color:#666;letter-spacing:-0.400px">Progress...</div>
<svg style="left:548px;top:391.5px" width="16" height="14" viewBox="0 0 16 14" ><circle cx="8" cy="7" r="6.300" fill="#fff" stroke="#777" stroke-width="0.900"/><circle cx="8" cy="7" r="4" fill="#ccc" stroke="#777" stroke-width="0.800"/></svg>
<div class="t" style="left:531px;top:404px;width:50px;text-align:center;color:#666;letter-spacing:-0.400px">Radio</div>
<svg style="left:586.5px;top:391.5px" width="16" height="14" viewBox="0 0 16 14" ><path d="M0.500 6h15v2h-15z" fill="#fff" stroke="#7d7d7d" stroke-width="0.700"/><circle cx="8" cy="7" r="2" fill="#ddd" stroke="#777" stroke-width="0.800"/></svg>
<div class="t" style="left:569.5px;top:404px;width:50px;text-align:center;color:#666;letter-spacing:-0.400px">Slider</div>
<svg style="left:510px;top:417.5px" width="16" height="10" viewBox="0 0 16 10" style="overflow:hidden"><rect x="0.5" y="0.5" width="15" height="12" fill="#fff" stroke="#7d7d7d" stroke-width="0.9" /><text x="8" y="8.500" font-size="5.500" text-anchor="middle" fill="#666" font-family="Liberation Sans, sans-serif">&lt;0&gt;</text></svg>
<svg style="left:548px;top:417.5px" width="16" height="5" viewBox="0 0 16 5" ><rect x="0.5" y="0.5" width="15" height="8" fill="#fff" stroke="#7d7d7d" stroke-width="0.9" /><path d="M0.500 2.500h15" stroke="#777" stroke-width="0.700"/></svg>
<div class="a" style="left:539px;top:422px;width:40.5px;height:5.5px;background:#9b9b9b"></div>
<svg style="left:557px;top:423.5px" width="5" height="3" viewBox="0 0 5 3" ><path d="M0 0h5l-2.500 2.800z" fill="#333"/></svg>
<div class="a" style="left:500.5px;top:428.5px;width:116.5px;height:10px;background:#dedede"></div>
<svg style="left:503.5px;top:430.5px" width="6" height="6" viewBox="0 0 6 6" ><rect x="0.500" y="0.500" width="5.500" height="5" fill="#eee" stroke="#888" stroke-width="0.800"/><path d="M4.200 2a1.300 1.300 0 1 0 0 2" stroke="#777" stroke-width="0.600" fill="none"/></svg>
<div class="t " style="left:511.8px;top:428.7px;color:#222">Custom UI components (0)</div>
<svg style="left:608px;top:432.0px" width="5" height="3" viewBox="0 0 5 3" ><path d="M0 0h5l-2.500 2.800z" fill="#444"/></svg>
<svg style="left:510px;top:442px" width="16" height="16" viewBox="0 0 16 16" ><circle cx="8" cy="8" r="7.300" fill="#fff" stroke="#777" stroke-width="0.900"/><path d="M5 8h6M8 5v6" stroke="#555" stroke-width="0.900"/></svg>
<div class="a" style="left:500.5px;top:468.5px;width:116.5px;height:10.5px;background:#dedede"></div>
<svg style="left:503.5px;top:470.75px" width="6" height="6" viewBox="0 0 6 6" ><rect x="1.500" y="0.500" width="4.500" height="5.500" fill="#eee" stroke="#888" stroke-width="0.800"/><path d="M0 2h2M0 4h2" stroke="#888" stroke-width="0.600"/></svg>
<div class="t " style="left:511.8px;top:468.9px;color:#222">Snippets (0)</div>
<svg style="left:608px;top:472.25px" width="5" height="3" viewBox="0 0 5 3" ><path d="M0 2.800h5l-2.500-2.800z" fill="#444"/></svg>
<div class="a" style="left:619px;top:51px;width:138.8px;height:429px;background:#f8f8f8;border:1px solid #3d97e8;border-right:1.300px solid #3d97e8"></div>
<div class="a" style="left:620px;top:52px;width:136.8px;height:16px;background:#d2d2d2"></div>
<div class="a" style="left:620px;top:52px;width:24px;height:16px;background:#fff"></div>
<div class="a" style="left:620px;top:67.5px;width:24px;height:1.5px;background:#2b8fe6"></div>
<div class="a" style="left:644px;top:68px;width:112.8px;height:1px;background:#c2c2c2"></div>
<svg style="left:626.5px;top:55.5px" width="11" height="9" viewBox="0 0 11 9" ><rect x="0.500" y="0.500" width="10" height="8" fill="#fff" stroke="#1e88e5" stroke-width="1"/><path d="M0.500 3h10M0.500 5.800h10M3.500 0.500v8" stroke="#1e88e5" stroke-width="0.900"/></svg>
<svg style="left:651.5px;top:55.5px" width="10" height="10" viewBox="0 0 10 10" ><rect x="0.500" y="0.500" width="7" height="8" fill="#fff" stroke="#555" stroke-width="0.900"/><path d="M2 2.500h4M2 4.500h2" stroke="#555" stroke-width="0.700"/><circle cx="6" cy="6" r="2" fill="#fff" stroke="#444" stroke-width="0.900"/><path d="M7.500 7.500l2 2" stroke="#444" stroke-width="1"/></svg>
<div class="a" style="left:668.5px;top:54px;width:1px;height:12px;background:#aaa"></div>
<svg style="left:673.5px;top:56px" width="10" height="9" viewBox="0 0 10 9" ><path d="M2 6.500l4.500-4.500a1.700 1.700 0 0 1 2.500 2.500l-4.500 4.500a1 1 0 0 1-1.500-1.500l4-4" fill="none" stroke="#555" stroke-width="1.100"/></svg>
<div class="a" style="left:690.8px;top:54px;width:1px;height:12px;background:#aaa"></div>
<svg style="left:698.3px;top:55.5px" width="10" height="10" viewBox="0 0 10 10" ><rect x="0.500" y="0.500" width="9" height="9" fill="#a4a4a4" stroke="#555" stroke-width="0.900"/><path d="M0.500 2.300h9" stroke="#444" stroke-width="1.300"/><path d="M3 4l2.500 2l-2.500 2" fill="none" stroke="#333" stroke-width="0.900"/></svg>
<svg style="left:733.2px;top:55.5px" width="18" height="7" viewBox="0 0 18 7" ><rect x="0.500" y="0.500" width="5" height="2" fill="#e4e4e4" stroke="#949494" stroke-width="0.8"/><rect x="12.500" y="0.500" width="5" height="4.800" fill="#e8e8e8" stroke="#949494" stroke-width="0.8"/><path d="M12.500 1.500h5.500" stroke="#949494" stroke-width="0.8"/></svg>
<div class="a" style="left:620px;top:69px;width:136.8px;height:15px;background:#e2e2e2"></div>
<svg style="left:623.5px;top:72px" width="8" height="8" viewBox="0 0 8 8" ><path d="M3.500 0.800l3.500 3.500l-1.500 0.300l-1.500 1.500l0 1.500l-3.500-3.500l1.500 0l1.500-1.500z" fill="none" stroke="#666" stroke-width="0.800"/><path d="M2.300 5.700l-2 2" stroke="#666" stroke-width="0.800"/></svg>
<svg style="left:638.5px;top:75px" width="5" height="3" viewBox="0 0 5 3" ><path d="M0 0h5l-2.500 2.800z" fill="#555"/></svg>
<div class="a" style="left:620px;top:84px;width:136.8px;height:1px;background:#cfcfcf"></div>
<div class="a" style="left:620px;top:85px;width:136.8px;height:17.5px;background:#e3e3e3"></div>
<svg style="left:628px;top:90px" width="8" height="7" viewBox="0 0 8 7" ><rect x="0.500" y="0.500" width="7" height="6" fill="#fff" stroke="#666" stroke-width="0.9"/><circle cx="4" cy="3.500" r="1.700" fill="none" stroke="#777" stroke-width="0.800"/></svg>
<div class="t " style="left:640px;top:88.5px;color:#222">Button</div>
<div class="a" style="left:749px;top:103px;width:8px;height:366px;background:#f0f0f0"></div>
<div class="a" style="left:749px;top:112.5px;width:8px;height:206px;background:#cdcdcd"></div>
<svg style="left:750.5px;top:106px" width="5" height="3" viewBox="0 0 5 3" ><path d="M0.500 2.800l2-2.200l2 2.200" fill="none" stroke="#444" stroke-width="1"/></svg>
<svg style="left:750.5px;top:463px" width="5" height="3" viewBox="0 0 5 3" ><path d="M0.500 0.300l2 2.200l2-2.200" fill="none" stroke="#444" stroke-width="1"/></svg>
<div class="a" style="left:620px;top:469.5px;width:136.5px;height:9.5px;background:#f0f0f0"></div>
<div class="a" style="left:627px;top:470.5px;width:98px;height:7.5px;background:#cdcdcd"></div>
<svg style="left:622.5px;top:471.5px" width="3" height="5" viewBox="0 0 3 5" ><path d="M2.700 0.500l-2.200 2l2.200 2" fill="none" stroke="#444" stroke-width="1"/></svg>
<svg style="left:743px;top:471.5px" width="3" height="5" viewBox="0 0 3 5" ><path d="M0.300 0.500l2.200 2l-2.200 2" fill="none" stroke="#444" stroke-width="1"/></svg>
<div class="t b" style="left:628.5px;top:112.0px;color:#111;letter-spacing:-0.250px">Attributes</div>
<svg style="left:634px;top:127.80000000000001px" width="5" height="3" viewBox="0 0 5 3" ><path d="M0 0h5l-2.500 2.800z" fill="#222"/></svg>
<div class="t " style="left:642.5px;top:124.8px;color:#222">General</div>
<div class="t " style="left:643.5px;top:141.0px;">ID</div>
<div class="a" style="left:674px;top:139px;width:75px;height:13.5px;background:#fff;border:1px solid #c8c8c8;border-right:none"></div>
<div class="t " style="left:678px;top:141.0px;color:#777">button2</div>
<div class="t " style="left:643.5px;top:158.8px;">Disable</div>
<svg style="left:674.5px;top:159.5px" width="8" height="8" viewBox="0 0 8 8" ><circle cx="4" cy="4" r="3.300" fill="#fff" stroke="#999" stroke-width="0.800"/></svg>
<div class="t " style="left:685.5px;top:159.1px;color:#666">true</div>
<svg style="left:706.5px;top:159.5px" width="8" height="8" viewBox="0 0 8 8" ><circle cx="4" cy="4" r="3.300" fill="#fff" stroke="#1e88e5" stroke-width="0.900"/><circle cx="4" cy="4" r="1.700" fill="#1e88e5"/></svg>
<div class="t " style="left:717px;top:159.1px;color:#444">false</div>
<div class="t " style="left:643.5px;top:176.0px;">Text</div>
<div class="a" style="left:674px;top:174.5px;width:75px;height:13.5px;background:#fff;border:1px solid #4aa3ef;border-right:none"></div>
<div class="t " style="left:678px;top:176.4px;color:#777;letter-spacing:-0.300px">@locale/</div>
<div class="a" style="left:703px;top:177px;width:1px;height:8.5px;background:#222"></div>
<div class="t " style="left:643.5px;top:192.3px;">Data Bin...</div>
<div class="a" style="left:674px;top:191px;width:75px;height:13px;background:#f4f4f4;border:1px solid #c8c8c8;border-right:none"></div>
<div class="t " style="left:643.5px;top:209.0px;">Style</div>
<div class="a" style="left:674px;top:207px;width:75px;height:13px;background:#f4f4f4;border:1px solid #c8c8c8;border-right:none"></div>
<div class="a" style="left:628px;top:226.5px;width:119px;height:1px;background:#e4e4e4"></div>
<svg style="left:634px;top:233.7px" width="5" height="3" viewBox="0 0 5 3" ><path d="M0 0h5l-2.500 2.800z" fill="#222"/></svg>
<div class="t " style="left:642.5px;top:230.8px;color:#222">Color</div>
<div class="t " style="left:643.8px;top:247.8px;color:#444;letter-spacing:-0.400px">bg</div>
<div class="a" style="left:703.8px;top:245.89999999999998px;width:13.5px;height:13.5px;background:#fff;border:1px solid #d2d2d2"></div>
<div class="t " style="left:643.8px;top:266.2px;color:#444;letter-spacing:-0.400px">bg_pressed</div>
<div class="a" style="left:703.8px;top:264.3px;width:13.5px;height:13.5px;background:#fff;border:1px solid #d2d2d2"></div>
<div class="t " style="left:643.8px;top:284.6px;color:#444;letter-spacing:-0.400px">bg_disabled</div>
<div class="a" style="left:703.8px;top:282.7px;width:13.5px;height:13.5px;background:#fff;border:1px solid #d2d2d2"></div>
<div class="t " style="left:643.8px;top:303.4px;color:#444;letter-spacing:-0.400px">effect</div>
<div class="a" style="left:703.8px;top:301.5px;width:13.5px;height:13.5px;background:#fff;border:1px solid #d2d2d2"></div>
<div class="t " style="left:643.8px;top:321.8px;color:#444;letter-spacing:-0.400px">text</div>
<div class="a" style="left:703.8px;top:319.9px;width:13.5px;height:13.5px;background:#fff;border:1px solid #d2d2d2"></div>
<div class="t " style="left:643.8px;top:340.1px;color:#444;letter-spacing:-0.400px">text_pressed</div>
<div class="a" style="left:703.8px;top:338.2px;width:13.5px;height:13.5px;background:#fff;border:1px solid #d2d2d2"></div>
<div class="t " style="left:643.8px;top:358.5px;color:#444;letter-spacing:-0.400px">text_disabled</div>
<div class="a" style="left:703.8px;top:356.59999999999997px;width:13.5px;height:13.5px;background:#fff;border:1px solid #d2d2d2"></div>
<div class="t lt" style="left:643.8px;top:377.1px;letter-spacing:-0.400px">icon</div>
<div class="a" style="left:703.8px;top:375.2px;width:13.5px;height:13.5px;background:#fff;border:1px solid #d2d2d2"></div>
<div class="t lt" style="left:643.8px;top:395.6px;letter-spacing:-0.400px">icon_pressed</div>
<div class="a" style="left:703.8px;top:393.7px;width:13.5px;height:13.5px;background:#fff;border:1px solid #d2d2d2"></div>
<div class="t lt" style="left:643.8px;top:414.1px;letter-spacing:-0.400px">icon_disabled</div>
<div class="a" style="left:703.8px;top:412.2px;width:13.5px;height:13.5px;background:#fff;border:1px solid #d2d2d2"></div>
<div class="a" style="left:628px;top:430.5px;width:119px;height:1px;background:#e4e4e4"></div>
<svg style="left:633px;top:438.3px" width="5" height="3" viewBox="0 0 5 3" ><path d="M0 0h5l-2.500 2.800z" fill="#222"/></svg>
<div class="t " style="left:642px;top:435.3px;color:#222">Align Hint</div>
<div class="t " style="left:644px;top:452.6px;color:#222">X</div>
<svg style="left:674px;top:453.5px" width="7" height="7" viewBox="0 0 7 7" ><rect x="0.500" y="0.500" width="6" height="6" fill="#fff" stroke="#1e88e5" stroke-width="0.900"/><path d="M1.700 3.500l1.500 1.500l2.300-3" fill="none" stroke="#1e88e5" stroke-width="0.900"/></svg>
<div class="a" style="left:687.5px;top:453.5px;width:1.5px;height:7px;background:#aaa"></div>
<div class="a" style="left:689px;top:457px;width:37.5px;height:1px;background:#c4c4c4"></div>
<div class="a" style="left:731px;top:450.5px;width:17.5px;height:13px;background:#f4f4f4;border:1px solid #cfcfcf"></div>
<div class="t lt" style="left:736.5px;top:452.6px;color:#aaa">fill</div>
<svg style="left:674px;top:467px" width="7" height="2" viewBox="0 0 7 2" ><path d="M0 1.500h7" stroke="#b5cfea" stroke-width="1"/></svg>
<div class="a" style="left:687.5px;top:467.5px;width:1.5px;height:1.5px;background:#bbb"></div>
<div class="a" style="left:731px;top:466px;width:17.5px;height:3px;background:#f4f4f4;border:1px solid #cfcfcf;border-bottom:none"></div>
<div class="a" style="left:2px;top:479.5px;width:755.3px;height:20.5px;background:#e4e4e4;border-top:1px solid #cfcfcf"></div>
<div class="a" style="left:679.5px;top:188.5px;width:168px;height:114px;background:#fff;border:1px solid #c4c4c4;box-shadow:1px 1px 3px rgba(0,0,0,0.250)"></div>
<div class="a" style="left:682px;top:193px;width:62.5px;height:8.7px;background:#d9d9d9"></div>
<div class="a" style="left:682px;top:203.2px;width:62.5px;height:8.7px;background:#e6ecf2"></div>
<svg style="left:682.5px;top:192.8px" width="9" height="8" viewBox="0 0 9 8" ><ellipse cx="3" cy="5" rx="2.500" ry="1.900" fill="#e0a41a" stroke="#7a5200" stroke-width="0.800" transform="rotate(-35 3 5)"/><ellipse cx="5.800" cy="3" rx="2.500" ry="1.900" fill="#e0a41a" stroke="#7a5200" stroke-width="0.800" transform="rotate(-35 5.800 3)"/></svg>
<div class="t " style="left:691.8px;top:192.3px;color:#222;letter-spacing:-0.500px">@locale/MSG_ID1</div>
<svg style="left:682.5px;top:203.2px" width="9" height="8" viewBox="0 0 9 8" ><ellipse cx="3" cy="5" rx="2.500" ry="1.900" fill="#e0a41a" stroke="#7a5200" stroke-width="0.800" transform="rotate(-35 3 5)"/><ellipse cx="5.800" cy="3" rx="2.500" ry="1.900" fill="#e0a41a" stroke="#7a5200" stroke-width="0.800" transform="rotate(-35 5.800 3)"/></svg>
<div class="t " style="left:691.8px;top:202.7px;color:#222;letter-spacing:-0.500px">@locale/MSG_ID2</div>
<svg style="left:733px;top:206px" width="6" height="10" viewBox="0 0 6 10" ><path d="M0.500 0.500v8l2-1.800l1.300 2.800l1-0.500l-1.300-2.700h2.500z" fill="#fff" stroke="#222" stroke-width="0.700"/></svg>
<svg style="left:0px;top:0px" width="850" height="503" viewBox="0 0 850 503" >
<g fill="none" stroke="#9a9a9a" stroke-width="0.800">
<circle cx="554.500" cy="175.700" r="18.900" stroke="#a8a8a8"/>
<circle cx="556.700" cy="241.300" r="17.600" stroke="#a8a8a8"/>
<circle cx="516.700" cy="239.300" r="20.500" stroke="#a8a8a8"/>
<path d="M348 133.3 C353.5 133.5 367.5 133.9 381.2 134.5 C394.9 135.1 417.4 136.0 430.1 136.9 C442.9 137.8 448.0 138.5 457.7 139.7 C467.4 140.9 478.0 142.1 488.2 144.3 C498.4 146.5 511.1 150.1 518.8 152.8 C526.4 155.5 530.4 158.5 534.1 160.5 C537.8 162.5 539.8 164.2 540.9 165"/>
<path d="M332 166 C340.2 166.3 365.2 166.9 381.2 168.1 C397.1 169.3 414.9 171.7 427.7 173.3 C440.4 174.9 447.6 175.7 457.7 177.9 C467.8 180.1 478.0 183.3 488.2 186.5 C498.4 189.7 510.1 193.6 518.8 197.2 C527.5 200.8 534.4 203.8 540.3 207.9 C546.2 212.0 551.3 219.1 554 221.7 C556.7 224.3 556.1 223.2 556.5 223.5"/>
<path d="M358 325.1 C364.4 324.6 384.3 323.4 396.5 321.9 C408.7 320.3 420.8 317.8 431 315.8 C441.2 313.8 448.2 312.8 457.7 309.7 C467.2 306.6 479.5 302.2 488.2 297.4 C496.9 292.5 504.6 286.0 509.7 280.6 C514.8 275.2 516.8 268.9 518.8 265.3 C520.8 261.8 521.4 260.3 521.9 259.3"/>
<path d="M338 412.8 C343.8 412.4 362.1 412.2 373 410.6 C383.9 409.0 394.8 405.8 403.5 402.9 C412.2 400.0 419.0 396.3 425.5 393.5 C432.0 390.7 434.5 390.1 442.4 386.1 C450.3 382.1 462.8 376.2 473 369.3 C483.2 362.4 495.9 351.9 503.5 344.8 C511.1 337.7 514.2 333.1 518.8 326.5 C523.4 319.9 527.5 312.8 531.1 305.1 C534.7 297.5 538.0 288.5 540.3 280.6 C542.6 272.8 544.0 261.8 544.8 258"/>
<path d="M393 428.500 L711 214.500" stroke="#777" stroke-dasharray="3 2.200"/>
</g>
<g fill="#9a9a9a">
<path d="M345 133.200l7.500-2.900v6z"/>
<path d="M329.200 166l7.500-3v6z"/>
<path d="M354.600 325.400l7.300-3.600l0.500 6z"/>
<path d="M334.700 413.100l7.300-3.600l0.500 6z"/>
<path d="M389.300 431l4.200-7l3.600 5.200z" fill="#888"/>
</g>
<g stroke="#ee3a42" stroke-width="1.300" fill="none">
<path d="M422 89.100L479 89.500"/>
<path d="M687.500 212.800H753.500"/>
<path d="M719.500 213.500L779 236.500"/>
</g>
<g font-family="Liberation Sans, sans-serif" font-size="10.500" fill="#fff" text-anchor="middle" letter-spacing="0">
<circle cx="430" cy="136.900" r="9.400" fill="#b01318"/><text x="430" y="140.7">1</text>
<circle cx="427.800" cy="173.300" r="9.400" fill="#b01318"/><text x="427.800" y="177.1">3</text>
<circle cx="431" cy="315.800" r="9.400" fill="#b01318"/><text x="431" y="319.6">2</text>
<circle cx="425.600" cy="393.600" r="9.400" fill="#b01318"/><text x="425.600" y="397.4">3</text>
<circle cx="425.600" cy="413.600" r="9.400" fill="#b01318"/><text x="425.600" y="417.4">4</text>
<circle cx="413" cy="87.900" r="9.400" fill="#b01318"/><text x="413" y="91.7">5</text>
</g>
<text x="752" y="250" font-family="Liberation Sans, sans-serif" font-size="12" font-weight="bold" fill="#e8202a" letter-spacing="-0.500" word-spacing="2">String Key</text>
</svg>
</body></html>
